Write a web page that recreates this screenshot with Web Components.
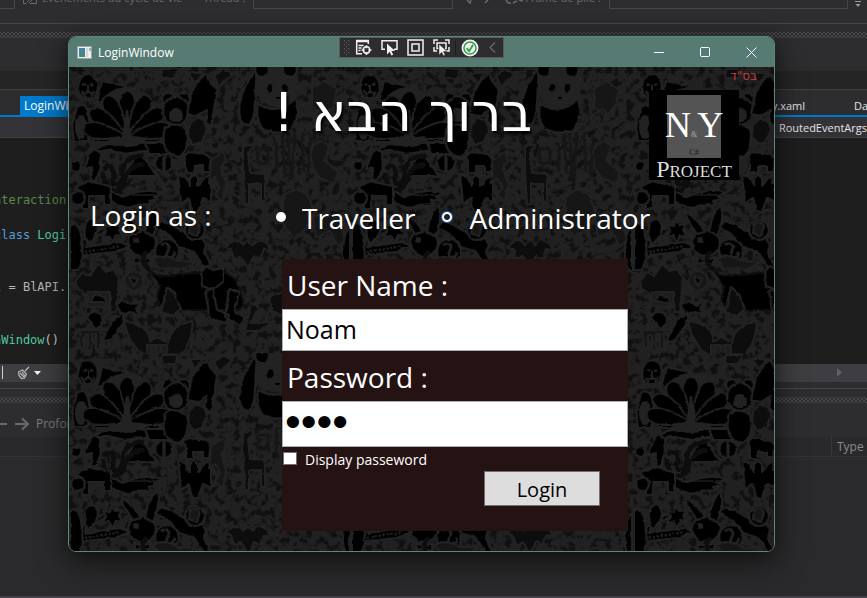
<!DOCTYPE html>
<html lang="fr">
<head>
<meta charset="utf-8">
<title>LoginWindow</title>
<style>
html,body{margin:0;min-height:100%;background:#2d2d30}
body{font-family:"Open Sans","Noto Sans",sans-serif;font-size:12px;color:#f1f1f1}
</style>
</head>
<body>
<ide-desktop>
  <login-window heading="LoginWindow">
    <debug-strip slot="overlay"></debug-strip>
    <login-view></login-view>
  </login-window>
</ide-desktop>
<script>
function define(name, html, setup){
  const t=document.createElement('template');
  t.innerHTML=html;
  customElements.define(name, class extends HTMLElement{
    constructor(){
      super();
      this.attachShadow({mode:'open'}).append(t.content.cloneNode(true));
    }
    connectedCallback(){ if(setup) setup(this,this.shadowRoot); }
  });
}

define('grip-dots',`<style>
:host{display:block;height:6px;opacity:.9;background-image:radial-gradient(circle,#4b4b50 0 .8px,transparent 1px),radial-gradient(circle,#4b4b50 0 .8px,transparent 1px);background-size:4px 4px;background-position:0 0,2px 2px}
</style>`);

define('code-lines',`<style>
:host{display:flex;flex-direction:column;font:12px/18px "DejaVu Sans Mono",monospace;margin-left:-6px;padding-top:53px;white-space:pre;color:#c8c8c8}
.a{height:35px;color:#5a8a4a}.b{height:52px;color:#4ec9a0}.c{height:53px;color:#b4b4b4}.d{color:#4ec9a0}
.k{color:#569cd6}.o{color:#d08020}.p{color:#c8c8c8}
</style><div class="a">nteraction</div><div class="b"><span class="k">class</span> Logi</div><div class="c"><span class="o">l</span> = BlAPI.</div><div class="d">nWindow<span class="p">()</span></div>`);

define('ide-desktop',`<style>
:host{display:flex;flex-direction:column;position:relative;min-height:100vh;overflow:hidden;background:#2d2d30;box-sizing:border-box}
*{box-sizing:border-box}
.tools{height:24px;border-bottom:1px solid #46464a;display:flex;align-items:flex-start;color:#6a6a6d;font-size:11px;line-height:16px;overflow:hidden}
.tools span{margin-top:-10px;white-space:nowrap}
.box{height:9px;border:1px solid #46464a;border-top:0;background:#2d2d30}
.box.first{width:15px;border-left:0}
.box.thread{width:200px;margin-left:8px}.box.frame{flex:1;margin-left:8px}
.thr{margin-left:21px}
.tools svg{flex:none;display:block}
grip-dots{margin-top:8px}
.gap{height:33px}
.well{height:19px;background:#252526;border-bottom:1px solid #3f3f46}
.tabs{height:27px;padding:6px 0 0 20px;border-bottom:2px solid #007acc;display:flex;line-height:20px;overflow:hidden}
.tab{background:#007acc;color:#fff;padding-left:4px;width:110px;height:21px}
.tabs .r{margin-left:auto;color:#e4e4e4;font-size:11px}
.tabs .e{width:13px;margin-left:49px;color:#e4e4e4;white-space:nowrap;font-size:11px}
.nav{height:21px;background:#333337;border-bottom:1px solid #434346;line-height:22px;text-align:right;color:#e4e4e4;font-size:11px}
.edit{height:226px;background:#1e1e1e}
.scroll{height:18px;background:#3e3e42;display:flex;align-items:center;justify-content:space-between;padding-right:24px}
.line{height:7px;border-bottom:1px solid #46464a}
.panel{height:34px;padding-top:8px;display:flex;align-items:center;gap:7px;color:#7b7b7e;line-height:18px}
.head{height:20px;background:#29292b;border-bottom:1px solid #333337;display:flex;justify-content:flex-end;line-height:19px;color:#8a8a8d}
.head span{border-left:1px solid #38383c;padding-left:5px;width:36px}
.list{flex:1;background:#2a2a2c}
.foot{height:2px;background:#44404c}
::slotted(login-window){position:absolute;left:68px;right:92px;top:36px}
</style>
<div class="tools"><div class="box first"></div>
<svg width="27" height="9" viewBox="0 0 27 9" fill="none" stroke="#6a6a6d"><path d="M8.500 0v3.500h3M15 3.500h6.500V0M12 2l4-4M14 3l3-3"/></svg>
<span>Événements du cycle de vie</span><span class="thr">Thread :</span><div class="box thread"></div>
<svg width="72" height="9" viewBox="0 0 72 9" fill="none" stroke="#6a6a6d" stroke-width="1.500"><path d="M14 0l3 3 1-3M32 3l3-3M53 0l2 3h3M60 3l4-2M66 0l4 1"/></svg>
<span>Frame de pile :</span><div class="box frame"></div>
<svg width="19" height="9" viewBox="0 0 19 9"><path d="M7 1.500h6" stroke="#999"/><path d="M7.500 4h5L10 7z" fill="#999"/></svg></div>
<grip-dots></grip-dots><div class="gap"></div><div class="well"></div>
<div class="tabs"><div class="tab">LoginWi</div><span class="r">y.xaml</span><span class="e">Da</span></div>
<div class="nav">RoutedEventArgs</div>
<div class="edit"><code-lines></code-lines></div>
<div class="scroll"><svg width="46" height="18" viewBox="0 0 46 18"><path d="M2.500 2v13" stroke="#d0d0d0"/><g stroke="#bbb" fill="none"><path d="M18.500 8l4-2 4 4-2 4-3 .5-2.500-3zM20 9l4 4M22 8l3 4M25 7l4-4" stroke-width="1.200"/></g><path d="M34 7h7l-3.500 4z" fill="#f1f1f1"/></svg>
<svg width="7" height="10" viewBox="0 0 7 10"><path d="M1 0l5 4.500L1 9z" fill="#5f5f64"/></svg></div>
<div class="line"></div><grip-dots></grip-dots>
<div class="panel"><svg width="29" height="14" viewBox="0 0 29 14" fill="none" stroke="#6a6a6d" stroke-width="2"><path d="M0 7h7M15 7h13M22 1.500L28 7l-6 5.500"/></svg><span>Profor</span></div>
<div class="head"><span>Type</span></div><div class="list"></div><div class="foot"></div>
<slot></slot>`);

define('debug-strip',`<style>
:host{display:block}
div{display:flex;align-items:center;height:21px;box-sizing:border-box;background:#2d2d30;border:1px solid #5a5a5c;padding:0 1px 0 4px}
button{border:0;background:none;padding:0;display:grid;place-items:center;width:26px;height:19px}
.n{width:20px}.m{width:24px}
i{width:1px;height:14px;background:#1c1c1e;margin:0 2px 0 1px}
svg{display:block;fill:none;stroke:#f1f1f1;stroke-width:1.500}
</style><div>
<svg width="6" height="17" viewBox="0 0 6 17"><path d="M.5 1v16M4.500 1v16" stroke="#626266" stroke-width="1" stroke-dasharray="1 3"/><path d="M2.500 3v14" stroke="#626266" stroke-width="1" stroke-dasharray="1 3"/></svg>
<button aria-label="Arborescence visuelle"><svg width="17" height="17" viewBox="0 0 17 17"><path d="M7 14.700H1.700V1.500h11.600V5M1 2.500h13M3.500 6.500h5M3.500 9h3M3.500 11.500h2"/><circle cx="11.500" cy="11" r="3.200"/><path d="M11.500 6.200v3M11.500 13v3M6.500 11h3M13.500 11h3"/></svg></button>
<button aria-label="Sélectionner un élément"><svg width="17" height="17" viewBox="0 0 17 17"><path d="M4 10.200H1V1.700h15v8.500h-3"/><path d="M6 4.500v11l2.700-2.700 1.700 3.700 1.800-.8-1.700-3.600h3.600z" fill="#f1f1f1" stroke="none"/></svg></button>
<button aria-label="Afficher les ornements"><svg width="17" height="17" viewBox="0 0 17 17"><path d="M1 1h15v15H1zM5 5h7v7H5z"/></svg></button>
<button aria-label="Suivre l’élément"><svg width="17" height="17" viewBox="0 0 17 17"><path d="M1 5V1h4M12 1h4v4M16 8v4h-3M4 12H1V8M5.500 9.500H4V4h9v5.500h-1"/><path d="M6 5v11l2.700-2.700 1.700 3.500 1.800-.8-1.700-3.500h3.600z" fill="#f1f1f1" stroke="#2d2d30" stroke-width=".5"/></svg></button>
<i></i><button class="m" aria-label="Rechargement à chaud"><svg width="18" height="18" viewBox="0 0 18 18"><circle cx="9" cy="9" r="7.700" fill="#f1f1f1" stroke="#f1f1f1"/><circle cx="9" cy="9" r="6" stroke="#369b46"/><path d="M5.600 9.200l2.500 3 4-6.500" stroke="#369b46" stroke-width="1.800"/></svg></button>
<button class="n" aria-label="Réduire"><svg width="9" height="11" viewBox="0 0 9 11"><path d="M7 .5L2 5.500l5 5" stroke="#6a6a6d" stroke-width="1.200"/></svg></button>
</div>`);

define('login-window',`<style>
:host{display:flex;flex-direction:column;border:1px solid #5b887c;border-radius:8px;box-sizing:border-box;overflow:visible;background:#222;box-shadow:0 12px 32px rgba(0,0,0,.45),0 2px 18px rgba(0,0,0,.3)}
header{height:30px;background:#567b72;border-radius:7px 7px 0 0;display:flex;align-items:center;color:#fff}
header>svg{margin:0 6px 0 8px}
nav{margin-left:auto;display:flex;height:100%}
button{width:46px;border:0;background:none;display:grid;place-items:center;padding:0}
nav svg{fill:none;stroke:#fff}
.overlay{position:absolute;top:0;left:0;right:0;display:flex;justify-content:center}
</style>
<header><svg width="15" height="13" viewBox="0 0 15 13"><rect width="15" height="13" fill="#9aa5a3"/><rect x="1" y="1" width="13" height="11" fill="#eee"/><rect x="2" y="2" width="6" height="9" fill="#3f8a7c"/><path d="M2 2h6L2 9z" fill="#4d7fa8"/><rect x="9" y="2" width="2" height="9" fill="#d5d5d5"/><path d="M12 2h2v3h-2z" fill="#8db8ce"/></svg><span id="t"></span>
<nav><button aria-label="Réduire"><svg width="11" height="11"><path d="M0 5.500h10"/></svg></button><button aria-label="Agrandir"><svg width="11" height="11"><rect x=".5" y=".5" width="9" height="9" rx="1"/></svg></button><button aria-label="Fermer"><svg width="11" height="11"><path d="M.5 .5l10 10M10.500 .5l-10 10"/></svg></button></nav></header>
<slot></slot><div class="overlay"><slot name="overlay"></slot></div>`,(el,r)=>{r.getElementById('t').textContent=el.getAttribute('heading');});

/* Repeating 282 x 286 tile of animal silhouettes over a fine mottled ground. */
define('animal-wallpaper',`<style>:host{display:block}svg{display:block;width:100%;height:100%}</style>
<svg aria-hidden="true"><defs>
<filter id="n" x="0" y="0" width="100%" height="100%"><feTurbulence type="fractalNoise" baseFrequency=".14" numOctaves="3" seed="8"/><feColorMatrix values="0 0 0 0 0  0 0 0 0 0  0 0 0 0 0  6 0 0 0 -3"/></filter>
<filter id="w" x="0" y="0" width="100%" height="100%"><feTurbulence type="fractalNoise" baseFrequency=".14" numOctaves="2" seed="3" result="t"/><feDisplacementMap in="SourceGraphic" in2="t" scale="3" xChannelSelector="R" yChannelSelector="G"/></filter>
<pattern id="p" width="282" height="286" patternUnits="userSpaceOnUse">
<g fill="#060606" stroke="#212121" stroke-width="2" stroke-linejoin="round">
<ellipse cx="19" cy="20" rx="10" ry="13"/><path d="M14 17l3 1M21 18l3-1M19 18v6l-3 3M19 24l4 3M13 24l3 7 6 0 3-7" fill="none" stroke-width="2"/>
<path d="M33 14l24 5-9 12-20 4z"/>
<path d="M8 40q8-6 11 5l3 18-4 11H5L3 60z"/><ellipse cx="12" cy="60" rx="5" ry="11" fill="#212121"/>
<path d="M24 72h68v3H24zM24 86q10-12 22-8l20-3 20 2 8 9q-10-4-18-2l-20 3-18-4z"/><path d="M76 76h20l8 11H80z"/>
<circle cx="58" cy="50" r="30" fill="#212121" stroke="none"/>
<g stroke-width="1.500"><path id="f" d="M58 69C52 52 49 42 50 34q2-10 8-10t8 10C67 42 64 52 58 69z"/><use href="#f" transform="rotate(28 58 69)"/><use href="#f" transform="rotate(-28 58 69)"/><use href="#f" transform="rotate(55 58 69)"/><use href="#f" transform="rotate(-55 58 69)"/><use href="#f" transform="rotate(80 58 69)"/><use href="#f" transform="rotate(-80 58 69)"/></g>
<path d="M54 72l4-28 4 28z" fill="#212121"/>
<circle cx="99" cy="32" r="6"/><circle cx="115" cy="32" r="6"/><ellipse cx="107" cy="44" rx="13" ry="14"/><circle cx="107" cy="48" r="6" fill="#212121"/><path d="M96 60q-5 20 6 28l8 2q12-8 7-28-10-8-21-2z"/>
<path d="M123 24l8-12 7-5 3 7 7 8-2 14-4 24-6-5 2-12-10 6-10-2z"/><path d="M120 58l7-7 8 3 3 8-5 13-9 3-5-9z" fill="#101010"/>
<path d="M145 9l9-7 10 5-6 5-8 8zM93 2h16l-3 9H92zM119 6h15l-8 10z" fill="#101010"/>
<path d="M188 2q-18 20-18 44 2 12 10 12 6-6 6-22zM189 37q-3 14 4 24 14 8 30 2 9-15 4-32-15 18-38 6z"/><ellipse cx="208" cy="19" rx="21" ry="19" fill="#222"/><circle cx="193" cy="3" r="7"/><circle cx="221" cy="3" r="7"/><ellipse cx="201" cy="21" rx="4" ry="5" transform="rotate(25 201 21)"/><ellipse cx="216" cy="21" rx="4" ry="5" transform="rotate(-25 216 21)"/><path d="M206 30h6l-3 3z" stroke="none"/>
<path d="M21 86l4-4 6 3 1 16-5 12-5 1 1-14-8 2zM70 84l18 25H54z"/>
<path d="M35 102q5-6 9 0c3 9-4 15 4 15s4-14 8-20 13-9 19-8M34 106c0 22 20 22 22 5q4-12 18-14" fill="none" stroke="#070707" stroke-width="4"/>
<circle cx="95" cy="96" r="9"/><path d="M95 86v20" stroke-width="3"/>
<path d="M15 116q25 5 38 14 23-10 40-4l-8 4 5 2-10 2 3 3-14 1-10 3q-20-4-44-25z"/><path d="M55 124h32M53 128h33" stroke-width="1"/>
<path d="M11 118l8-4 18 4 5 2v18h-7v-9H20v13h-7v-17l-6-4z"/>
<path d="M115 89l5-4 17 2 5 5-2 13h-6v-6h-9v7h-8v-11z"/>
<path d="M109 107l7 3 5 9v-8l4-3 4 3v8l7-9 6-3v28l-8-4-5 14h-6l-3-14-8 6z"/>
<path d="M142 93l12-8 3 8-5 7 5 17-3 18-8-7 5-7-5-10-6 5z" fill="#171717"/>
<path d="M174 80l9-2 1 3-5 5 2 20 15 1v27h-4v-17h-12v20h-4l-2-33z" fill="#0a0a0a"/>
<path d="M188 82h11v14h-10zM213 67l3 40M219 65l2 48M226 65l-3 46M233 65l2 40M242 70l-3 38M251 68l2 40M207 75l1 30" fill="none" stroke="#151515" stroke-width="3"/>
<ellipse cx="73" cy="176" rx="14" ry="13"/><path d="M64 167Q52 150 53 145q13 8 19 20zM76 165q3-20 12-27 4 15-4 31z"/><circle cx="67" cy="173" r="2" fill="#222"/><path d="M65 190l8 3 8-3v7l-8-2-8 2z"/>
<path d="M86 160l6-6 9 3 14 8 16 3 6 9-2 8 7 15-5 3-12-18-15-5-10-12z"/>
<circle cx="98" cy="184" r="12"/><path d="M92 178q7-4 8 3l-3 8q7 5 9-4" fill="none" stroke-width="2.500"/>
<circle cx="126" cy="163" r="10"/><path d="M121 157q7-4 10 2l-3 10-8-3z" fill="#181818"/>
<path d="M8 184q9-20 33-24-6 7-20 11l-5 9 35-5 10 4-15 6-29 3-10 8z"/><path d="M13 178l24-13M16 185l35-6" stroke-dasharray="2 2"/>
<path d="M17 155q10-8 12 6-2 12-9 15-7-4-3-21zM42 153l4 5 7-1-3 6 4 6-7-1-3 7-4-6-6 1 3-7-3-5 7 1z"/>
<path d="M156 181q12-14 18-3l5-5 5 5q8-11 19 5l-8-1-4 10-6-3-6 12-7-12-7 3-3-10z" fill="#0d0d0d"/>
<path d="M81 203q-13-10-3-18" fill="none" stroke="#080808" stroke-width="4"/><path d="M79 202c10 13 35 4 48 4l20-2q19 2 23 16l5 18-5 5H95q-11-12-3-24" fill="#040404" stroke="#0b0b0b"/>
<path d="M132 204l5-5 7 4 10-2v14l-10 8-11-4z"/>
<path d="M84 192q10-7 25 2l18 1-10 6-27 1z" fill="#181818"/>
<path d="M6 214l8-9 7 4 8-12 8 8 7-3 6 9-3 34h-5l-2-17-15 2-3 17h-5l-1-20-7-5z" fill="#0e0e0e"/><path d="M18 225h23v15H18z" fill="#1e1e1e"/><path d="M21 235l6-8 9 4 2 7-5-3z"/>
<circle cx="65" cy="214" r="10" fill="#191919"/><path d="M60 210l9 2-4 7z"/>
<path d="M47 237l8-3 9 4 10-5-7 9 5 6-10-3-9 4z"/><path d="M98 220l8 7 6 15-8 7-12-4z" fill="#101010"/>
<path d="M55 254q25 3 26 21l7-5 6 3 5 3q3-19 25-22-2 27-17 39l-11-2-13 1q-22-9-28-38z" fill="#0d0d0d"/><path d="M78 278h20v17H78z" fill="#1c1c1c"/><path d="M82 278v15M87 278v15M92 278v15"/>
<path d="M18 251q4-10 14-4 6 10-5 15z"/><path d="M10 263h31l-2 16h-4v-13h-4v16h-4v-15h-4v17h-4v-16h-4v13h-4z" fill="#121212"/>
<path d="M44 253l11-7-2 12-11 15-9 1zM136 224l8-3 4 22 12 5-3 8-16-4zM160 222l10 3-4 19 10 7-5 8-15-9z"/>
<path d="M182 236l7 5-7 15h8l15-2-15 10h-14zM200 231q12-11 22 0l-4 15-7 3-8-4z" fill="#111"/>
<g fill="#131313"><path d="M214 132q10-15 24-4l7 17-8 17-13 8-10-14zM244 150l12-5 15 8 5 20-7 7-8-16-14 6z"/>
<path d="M242 84q10-17 18-4l-5 13 13 12-2 12-15-6-8-12zM243 22l12-8 13 8-4 18-10 8-11-8z"/><path d="M239 50l12-8 20 12M239 62l22-7 15 9" fill="none"/>
<path d="M228 203q18-17 34 2l12 16-7 9-16-14-14 7zM223 246l12-7 16 6 9 14-15 7-15-5zM234 274l9-9 13 5 4 11-15 5z"/></g>
<path d="M1 158q8-6 11 10l2 22-5 13H1zM281 160v46q-8-6-7-24 1-18 7-22z"/>
<circle cx="9" cy="131" r="7"/><circle cx="7" cy="99" r="5"/>
</g></pattern></defs>
<rect width="100%" height="100%" fill="#212121"/><rect width="100%" height="100%" filter="url(#n)" opacity=".5"/><rect width="100%" height="100%" fill="url(#p)" filter="url(#w)"/></svg>`);

define('project-logo',`<style>
:host{display:flex;flex-direction:column;align-items:center;width:90px;height:90px;box-sizing:border-box;padding-top:5px;background:#000;font-family:"Liberation Serif",serif;color:#fff}
.b{width:54px;height:65px;background:#545454;display:flex;flex-direction:column;align-items:center;overflow:visible}
.n{display:flex;align-items:baseline;justify-content:center;font-size:36px;line-height:40px;height:53px;padding-top:10px;box-sizing:border-box}
small{font-size:8px;color:#aaa}.c{font-size:8px;line-height:9px;color:#1c1c1c}
.p{font-size:24px;line-height:22px;font-variant:small-caps;color:#ddd}
</style><div class="b"><div class="n">N<small>&amp;</small>Y</div><div class="c">C#</div></div><div class="p">Project</div>`);

define('login-view',`<style>
*{box-sizing:border-box}
:host{display:block;position:relative;color:#fff;font-size:28px;line-height:38px;padding-bottom:20px;border-radius:0 0 7px 7px;overflow:hidden}
animal-wallpaper{position:absolute;inset:0}
main{position:relative}
.top{display:flex;justify-content:space-between;padding:0 17px 0 204px}
h1{font-family:"DejaVu Sans",sans-serif;font-size:53px;line-height:60px;font-weight:400;margin:16px 0 0;text-shadow:2px 3px 3px #000;white-space:nowrap}
.side{width:108px}
.bsd{height:23px;font-family:"DejaVu Sans",sans-serif;font-size:12px;line-height:18px;color:#c23c3f;text-align:start}
.as{display:flex;padding:16px 0 0 21px;height:79px}
.as>span{width:186px}
.as label{display:flex;align-items:flex-start;padding-top:3px}
.as input{appearance:none;margin:13px 16px 0 0;width:10px;height:10px;border-radius:50%;background:#fff}
.as input:checked{width:12px;height:12px;margin-top:12px;border:1px solid #2f62c0;background:radial-gradient(circle,#222 0 2.500px,#fff 3.500px)}
.as label+label{margin-left:26px}
form{margin:0 146px 0 213px;min-height:272px;background:#251313;display:flex;flex-direction:column}
form>label{padding:7px 0 0 5px;height:50px}
input.t{width:100%;height:42px;border:1px solid #abadb3;background:#fff;font:25px "Open Sans","Noto Sans",sans-serif;color:#000;padding:0 3px 2px;margin:0;border-radius:0;outline:0}
input.t[type=password]{height:46px;font:45px "Liberation Sans",sans-serif;padding:0 2px 4px}
form>label.chk{display:flex;align-items:center;gap:8px;height:24px;padding:2px 0 0 1px;font-size:14px;line-height:20px}
.chk input{appearance:none;width:14px;height:13px;margin:0 0 3px;border:1px solid #707070;background:#fff}
button{align-self:flex-end;margin-right:28px;width:116px;height:35px;border:1px solid #707070;background:#ddd;color:#000;font:20px "Open Sans","Noto Sans",sans-serif;padding:1px 0 0}
</style><animal-wallpaper></animal-wallpaper>
<main><div class="top"><h1 dir="rtl" lang="he">ברוך הבא !</h1><div class="side"><div class="bsd" dir="rtl" lang="he">בס"ד</div><project-logo></project-logo></div></div>
<div class="as" role="radiogroup" aria-labelledby="as"><span id="as">Login as :</span><label><input type="radio" name="role">Traveller</label><label><input type="radio" name="role" checked>Administrator</label></div>
<form><label for="u">User Name :</label><input class="t" id="u" value="Noam"><label for="p">Password :</label><input class="t" id="p" type="password" value="Noam"><label class="chk"><input type="checkbox">Display passeword</label><button type="button">Login</button></form></main>`);
</script>
</body>
</html>
